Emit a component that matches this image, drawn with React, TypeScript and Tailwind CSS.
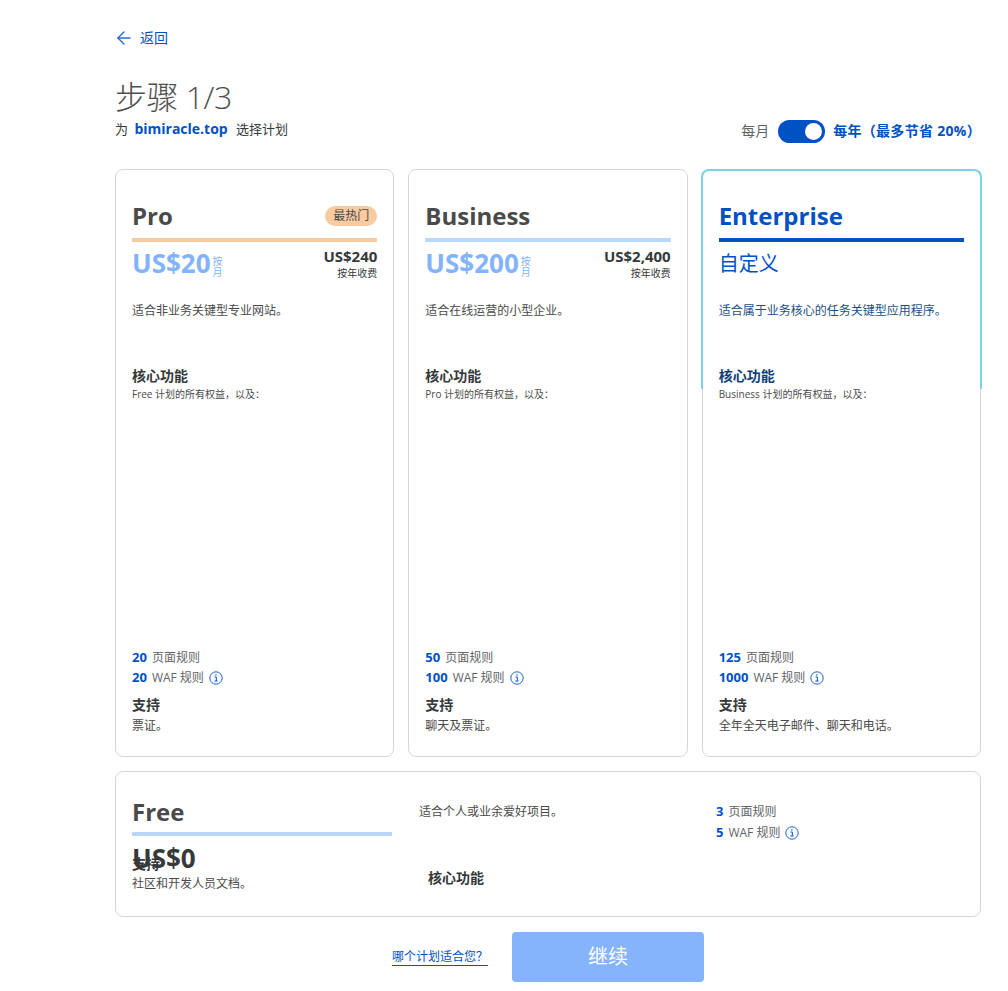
import React from "react";
import { ArrowLeft } from "lucide-react";

const Info = () => (
  <svg width="14" height="14" viewBox="0 0 14 14" fill="none" className="shrink-0">
    <circle cx="7" cy="7" r="6.2" stroke="#0051c3" strokeWidth="0.9" />
    <path d="M5.6 6h1.7v3.9M5.4 10h3.2" stroke="#0051c3" strokeWidth="1" />
    <rect x="6.3" y="3.3" width="1.2" height="1.3" fill="#0051c3" />
  </svg>
);

type Plan = {
  name: string;
  price?: string;
  yearly?: string;
  badge?: boolean;
  rule: string;
  desc: string;
  inherits: string;
  pages: string;
  waf: string;
  support: string;
  enterprise?: boolean;
};

const plans: Plan[] = [
  { name: "Pro", price: "US$20", yearly: "US$240", badge: true, rule: "bg-[#f9cba0]", desc: "适合非业务关键型专业网站。", inherits: "Free 计划的所有权益，以及：", pages: "20", waf: "20", support: "票证。" },
  { name: "Business", price: "US$200", yearly: "US$2,400", rule: "bg-[#b9d6fb]", desc: "适合在线运营的小型企业。", inherits: "Pro 计划的所有权益，以及：", pages: "50", waf: "100", support: "聊天及票证。" },
  { name: "Enterprise", rule: "bg-[#0051c3]", desc: "适合属于业务核心的任务关键型应用程序。", inherits: "Business 计划的所有权益，以及：", pages: "125", waf: "1000", support: "全年全天电子邮件、聊天和电话。", enterprise: true },
];

function Card({ p }: { p: Plan }) {
  const e = p.enterprise;
  return (
    <div className="relative flex h-[588px] flex-col rounded-lg border border-[#d5d7d8] bg-white px-4 pt-[30px]">
      {e && (
        <div className="pointer-events-none absolute -left-[2px] -right-[2px] -top-px h-[220px] rounded-t-lg border-x-2 border-t-2 border-[#7dd3e6]" />
      )}
      <div className="flex h-8 items-center justify-between">
        <span className={`text-[24px] font-bold leading-8 ${e ? "text-[#0051c3]" : "text-[#4a4a4a]"}`}>{p.name}</span>
        {p.badge && (
          <span className="flex h-5 w-[52px] items-center justify-center rounded-full bg-[#f9cba0] text-xs text-[#4a4a4a]">最热门</span>
        )}
      </div>
      <div className={`mt-[6px] h-1 ${p.rule}`} />
      {p.price ? (
        <div className="flex h-[42px] items-start justify-between">
          <div className="mt-[6px] flex items-center">
            <span className="text-[26px] font-bold leading-[30px] text-[#83b3fb]">{p.price}</span>
            <span className="ml-[1px] mt-[7px] flex w-[12px] shrink-0 flex-col text-center text-[10px] leading-[11px] text-[#83b3fb]">
              <span className="block h-[11px]">按</span>
              <span className="block h-[11px]">月</span>
            </span>
          </div>
          <div className="flex flex-col items-end pt-1">
            <span className="text-[15px] font-bold leading-5 text-[#36393a]">{p.yearly}</span>
            <span className="mt-[1px] text-[10px] leading-3 text-[#36393a]">按年收费</span>
          </div>
        </div>
      ) : (
        <div className="flex h-[42px] items-center pt-[2px] text-xl text-[#0051c3]">自定义</div>
      )}
      <p className={`mt-[19px] text-xs leading-4 ${e ? "text-[#1a4f86]" : "text-[#4a4a4a]"}`}>{p.desc}</p>
      <p className={`mt-[49px] text-sm font-bold leading-4 ${e ? "text-[#0f3f78]" : "text-[#36393a]"}`}>核心功能</p>
      <p className="mt-[2px] text-[10px] leading-4 text-[#4a4a4a]">{p.inherits}</p>
      <div className="flex-1" />
      <div className="flex h-5 items-center gap-[5px] text-xs text-[#5f6368]">
        <b className="text-[13px] text-[#0051c3]">{p.pages}</b> 页面规则
      </div>
      <div className="flex h-5 items-center gap-[5px] text-xs text-[#5f6368]">
        <b className="text-[13px] text-[#0051c3]">{p.waf}</b> WAF 规则 <Info />
      </div>
      <p className="mt-[9px] text-sm font-bold leading-4 text-[#36393a]">支持</p>
      <p className="mt-[5px] mb-[22px] text-xs leading-4 text-[#4a4a4a]">{p.support}</p>
    </div>
  );
}

export default function App() {
  return (
    <div className="min-h-[991px] bg-white pl-[115px] pr-[27px] font-['Open_Sans','Noto_Sans_CJK_SC',sans-serif] text-[#36393a]">
      <a className="flex h-[75px] items-center pl-px text-sm text-[#0051c3]">
        <ArrowLeft size={16} strokeWidth={1.1} absoluteStrokeWidth className="w-[16px] scale-[1.3] text-[#2f6fc4]" />
        <span className="ml-[8px]">返回</span>
      </a>
      <div className="flex h-[94px] justify-between">
        <div>
          <h1 className="text-[32px] font-light leading-[44px] tracking-[-0.5px] text-[#4f4f4f]">步骤 1/3</h1>
          <p className="text-[13px] leading-[19px]">
            为 <b className="ml-[3px] mr-[5px] text-sm text-[#0051c3]">bimiracle.top</b> 选择计划
          </p>
        </div>
        <div className="mb-[26px] flex h-[24px] items-center self-end text-sm">
          <span className="text-[#5f6368]">每月</span>
          <span className="ml-[9px] flex h-[23px] w-[47px] items-center justify-end rounded-full bg-[#0051c3] pr-[3px]">
            <span className="h-[17px] w-[17px] rounded-full bg-white" />
          </span>
          <b className="ml-[8px] tracking-[0.3px] text-[#0051c3]">每年（最多节省 20%）</b>
        </div>
      </div>
      <div className="grid grid-cols-3 gap-[14px]">
        {plans.map((p) => (
          <Card key={p.name} p={p} />
        ))}
      </div>
      <div className="mt-[14px] grid h-[146px] grid-cols-[277px_296px_1fr] rounded-lg border border-[#d5d7d8] bg-white">
        <div className="pl-4 pt-6">
          <div className="text-[24px] font-bold leading-8 text-[#4a4a4a]">Free</div>
          <div className="mt-[4px] h-1 w-[260px] bg-[#b9d6fb]" />
          <div className="relative z-10 mt-[6px] text-[26px] font-bold leading-8 text-[#36393a]">US$0</div>
          <p className="-mt-[18px] text-sm font-bold leading-4 text-[#36393a]">支持</p>
          <p className="mt-[4px] text-xs leading-4 text-[#4a4a4a]">社区和开发人员文档。</p>
        </div>
        <div className="pt-[32px]">
          <p className="pl-[26px] text-xs leading-4 text-[#4a4a4a]">适合个人或业余爱好项目。</p>
          <p className="mt-[50px] pl-[35px] text-sm font-bold leading-4 text-[#36393a]">核心功能</p>
        </div>
        <div className="pl-[27px] pt-[30px]">
          <div className="flex h-5 items-center gap-[5px] text-xs text-[#5f6368]">
            <b className="text-[13px] text-[#0051c3]">3</b> 页面规则
          </div>
          <div className="mt-px flex h-5 items-center gap-[5px] text-xs text-[#5f6368]">
            <b className="text-[13px] text-[#0051c3]">5</b> WAF 规则 <Info />
          </div>
        </div>
      </div>
      <div className="mt-[15px] flex items-center justify-center gap-[24px]">
        <a className="border-b border-[#0051c3] text-xs leading-4 text-[#0051c3]">哪个计划适合您？</a>
        <button className="h-[50px] w-[192px] rounded bg-[#85b4fc] text-xl font-normal text-white">继续</button>
      </div>
    </div>
  );
}
